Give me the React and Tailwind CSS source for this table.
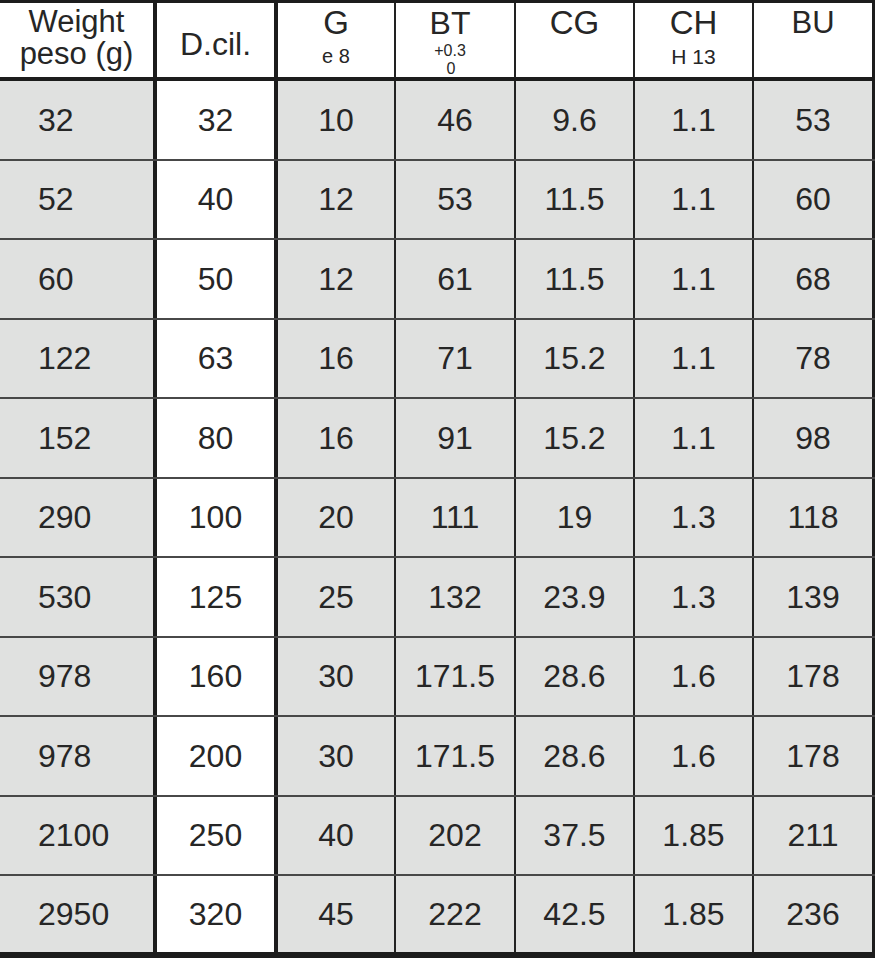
const rows = [
  ['32', '32', '10', '46', '9.6', '1.1', '53'],
  ['52', '40', '12', '53', '11.5', '1.1', '60'],
  ['60', '50', '12', '61', '11.5', '1.1', '68'],
  ['122', '63', '16', '71', '15.2', '1.1', '78'],
  ['152', '80', '16', '91', '15.2', '1.1', '98'],
  ['290', '100', '20', '111', '19', '1.3', '118'],
  ['530', '125', '25', '132', '23.9', '1.3', '139'],
  ['978', '160', '30', '171.5', '28.6', '1.6', '178'],
  ['978', '200', '30', '171.5', '28.6', '1.6', '178'],
  ['2100', '250', '40', '202', '37.5', '1.85', '211'],
  ['2950', '320', '45', '222', '42.5', '1.85', '236'],
]

const grid = 'grid grid-cols-[157px_121px_118px_120px_119px_119px_121px]'

// right border of each column, matching the drawing's line weights
const colBorder = [
  'border-r-[4px] border-[#1c1c1c]',
  'border-r-[4px] border-[#1c1c1c]',
  'border-r-[2px] border-[#222]',
  'border-r-[2px] border-[#222]',
  'border-r-[2px] border-[#222]',
  'border-r-[2px] border-[#222]',
  'border-r-[3px] border-[#1c1c1c]',
]

export default function App() {
  return (
    <div className="w-[875px] h-[959px] bg-white text-[#262626] font-['Liberation_Sans',Arial,sans-serif] overflow-hidden">
      <div className="border-t-[3px] border-[#1c1c1c]">
        {/* header */}
        <div className={`${grid} h-[78px] border-b-[4px] border-[#1c1c1c]`}>
          <div className={`${colBorder[0]} flex flex-col items-center pt-[3px] text-[31px] leading-[32px]`}>
            <span>Weight</span>
            <span>peso (g)</span>
          </div>
          <div className={`${colBorder[1]} flex items-center justify-center pt-[6px] text-[32px]`}>
            D.cil.
          </div>
          <div className={`${colBorder[2]} flex flex-col items-center pt-[1px]`}>
            <span className="text-[33px] leading-[38px]">G</span>
            <span className="text-[20px] leading-[28px]">e 8</span>
          </div>
          <div className={`${colBorder[3]} flex flex-col items-center pt-[2px] pr-[10px]`}>
            <span className="text-[32px] leading-[37px]">BT</span>
            <span className="text-[16px] leading-[18px]">+0.3</span>
            <span className="text-[16px] leading-[18px] pl-[2px]">0</span>
          </div>
          <div className={`${colBorder[4]} flex flex-col items-center pt-[1px]`}>
            <span className="text-[33px] leading-[38px]">CG</span>
          </div>
          <div className={`${colBorder[5]} flex flex-col items-center pt-[1px]`}>
            <span className="text-[33px] leading-[38px]">CH</span>
            <span className="text-[21px] leading-[30px]">H 13</span>
          </div>
          <div className={`${colBorder[6]} flex flex-col items-center pt-[1px]`}>
            <span className="text-[31px] leading-[38px]">BU</span>
          </div>
        </div>

        {/* body */}
        {rows.map((r, i) => {
          const last = i === rows.length - 1
          return (
            <div
              key={i}
              className={`${grid} ${last ? 'h-[81.5px] border-b-[6px] border-[#1c1c1c]' : 'h-[79.5px] border-b-[2px] border-[#484848]'}`}
            >
              {r.map((v, j) => (
                <div
                  key={j}
                  className={`${colBorder[j]} flex items-center text-[32px] ${j === 1 ? 'bg-white' : 'bg-[#e0e1e0]'} ${j === 0 ? 'justify-start pl-[38px]' : 'justify-center'}`}
                >
                  {v}
                </div>
              ))}
            </div>
          )
        })}
      </div>
    </div>
  )
}
